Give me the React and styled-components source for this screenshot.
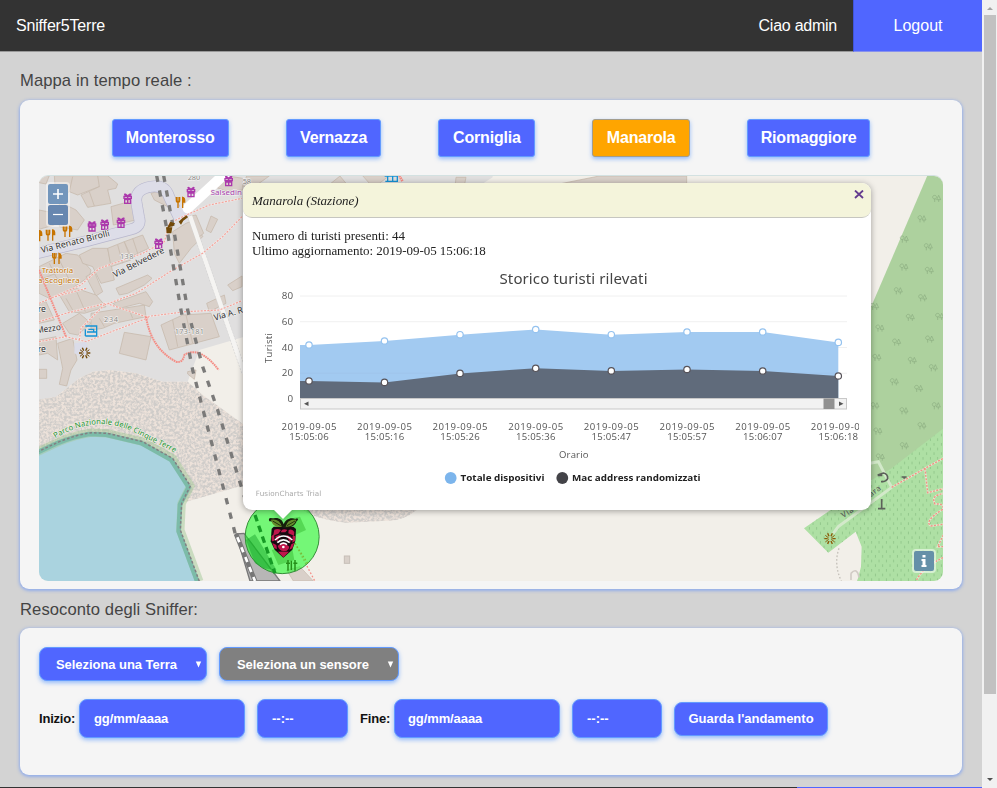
import React from "react";
import styled, { createGlobalStyle, css } from "styled-components";

const BLUE = "#5066ff";

const GlobalStyle = createGlobalStyle`
  * { box-sizing: border-box; }
  html, body { margin: 0; padding: 0; overflow: hidden; background: #d3d3d3; }
  body, button { font-family: "Liberation Sans", Arial, sans-serif; }
`;

const Screen = styled.div`
  display: flex;
  width: 997px;
  height: 788px;
  overflow: hidden;
`;
const Page = styled.div`
  display: flex;
  flex-direction: column;
  width: 982px;
  background: #d3d3d3;
`;
const Header = styled.header`
  display: flex;
  height: 52px;
  flex: none;
  background: #333;
  border-bottom: 1px solid #999;
  color: #fff;
  font-size: 16px;
  line-height: 51px;
`;
const Brand = styled.div`
  flex: 1;
  padding-left: 16px;
  letter-spacing: -0.17px;
`;
const Greeting = styled.div`
  padding-right: 16px;
  letter-spacing: -0.25px;
`;
const Logout = styled.a`
  width: 129px;
  height: 52px;
  text-align: center;
  background: ${BLUE};
  border-left: 1px solid #4055d8;
  border-bottom: 1px solid #8791ee;
`;
const Main = styled.main`
  display: flex;
  flex-direction: column;
  height: 735px;
  flex: none;
  padding: 0 20px;
`;
const Title = styled.h2`
  margin: 0;
  padding-top: ${(p) => p.$top}px;
  height: ${(p) => p.$h}px;
  font-size: 16.6px;
  line-height: 20px;
  font-weight: 400;
  letter-spacing: 0.09px;
  color: #444;
`;
const Card = styled.section`
  width: 942px;
  height: ${(p) => p.$h}px;
  flex: none;
  padding: 19px;
  border-radius: 9px;
  background: #f5f5f5;
  box-shadow: 0 1px 3px 1px rgba(87, 140, 255, 0.5);
`;
const glow = css`
  border: 1px solid #639bff;
  box-shadow: 0 2px 4px rgba(70, 140, 255, 0.55);
`;
const Towns = styled.nav`
  display: flex;
  justify-content: center;
  gap: 57px;
  height: 57px;
`;
const Town = styled.button`
  ${glow}
  width: ${(p) => p.$w}px;
  height: 38px;
  padding: 0;
  border-radius: 3px;
  border-color: ${(p) => (p.$active ? "#a39d8c" : "#639bff")};
  background: ${(p) => (p.$active ? "#ffa500" : BLUE)};
  color: #fff;
  font-size: 16px;
  font-weight: 700;
  letter-spacing: -0.18px;
`;
const MapFrame = styled.div`
  position: relative;
  width: 904px;
  height: 405px;
  border-radius: 9px;
  box-shadow: 0 -1px 0 #d3e1e1;
`;
const MapSvg = styled.svg`
  display: block;
  border-radius: 9px;
`;
const ZoomBox = styled.div`
  position: absolute;
  left: 7px;
  top: 6px;
  display: flex;
  flex-direction: column;
  gap: 1px;
  padding: 2px;
  border-radius: 4px;
  background: rgba(255, 255, 255, 0.45);
`;
const MapButton = styled.button`
  display: grid;
  place-items: center;
  width: 20px;
  height: 20px;
  padding: 0;
  border: 0;
  border-radius: 2px;
  background: ${(p) => p.$bg || "#7396bc"};
  color: #fff;
`;
const InfoBox = styled.div`
  position: absolute;
  left: 873px;
  top: 373px;
  padding: 2px;
  border-radius: 4px;
  background: rgba(255, 255, 255, 0.5);
`;
const Popup = styled.article`
  position: absolute;
  left: 204px;
  top: 7px;
  width: 628px;
  height: 327px;
  border-radius: 9px;
  background: #fff;
  filter: drop-shadow(0 1px 3px rgba(0, 0, 0, 0.35));
  font-family: "Liberation Serif", "Times New Roman", serif;
  color: #222;
  &::after {
    content: "";
    position: absolute;
    left: 30px;
    top: 326px;
    border: 10px solid transparent;
    border-top-color: #fff;
    border-bottom: 0;
  }
`;
const PopupHead = styled.header`
  display: flex;
  justify-content: space-between;
  height: 35px;
  padding: 7px 7px 0 9px;
  border-bottom: 1px solid #c6c6c0;
  border-radius: 9px;
  background: #f4f4db;
  font-size: 13px;
  line-height: 22px;
  font-style: italic;
  letter-spacing: -0.05px;
`;
const PopupText = styled.p`
  margin: 10px 0 0 9px;
  font-size: 13px;
  line-height: 15px;
  letter-spacing: -0.03px;
`;
const ChartSvg = styled.svg`
  display: block;
  margin: 4px 0 0 9px;
`;
const Row = styled.div`
  display: flex;
  align-items: center;
  height: ${(p) => p.$h}px;
  margin-bottom: 18px;
  font-size: 13px;
  font-weight: 700;
`;
const Field = styled.div`
  ${glow}
  display: flex;
  align-items: center;
  justify-content: space-between;
  width: ${(p) => p.$w}px;
  height: ${(p) => p.$h}px;
  margin-right: 12px;
  padding: 0 4px 0 ${(p) => p.$pad}px;
  border-radius: 8px;
  background: ${(p) => (p.$muted ? "#808080" : BLUE)};
  color: #fff;
  letter-spacing: ${(p) => p.$ls || 0}px;
`;
const Label = styled.label`
  width: ${(p) => p.$w}px;
  color: #111;
  letter-spacing: -0.2px;
`;
const Submit = styled.button`
  ${glow}
  width: 154px;
  height: 34px;
  padding: 0;
  border-radius: 8px;
  background: ${BLUE};
  color: #fff;
  font-size: 13px;
  font-weight: 700;
`;
const Footer = styled.footer`
  display: flex;
  justify-content: flex-end;
  height: 1px;
  flex: none;
  background: #333;
`;
const FooterAccent = styled.div`
  width: 185px;
  background: ${BLUE};
`;
const Scrollbar = styled.aside`
  display: flex;
  flex-direction: column;
  width: 15px;
  padding: 0 1px 0 2px;
  background: #f1f1f1;
`;
const Thumb = styled.div`
  height: 679px;
  background: #c1c1c1;
`;

const towns = [
  ["Monterosso", 117], ["Vernazza", 95.7], ["Corniglia", 97], ["Manarola", 97.5], ["Riomaggiore", 123.3],
];

const buildings = [
  "9,120 60,130 55,165 9,178", "55,17 200,17 215,40 125,75 100,65 60,90",
  "135,75 190,50 185,17 215,17 245,42 240,55 215,60 225,100 155,112", "225,110 290,92 300,150 232,165",
  "70,95 120,120 145,150 125,180 70,170", "9,17 40,17 30,42 9,38",
  "9,290 90,250 125,255 165,300 160,320 100,360 40,385 9,370", "130,255 170,235 215,235 235,330 195,340 170,290 140,280",
  "215,235 265,215 285,270 225,290", "265,215 320,195 338,235 285,260", "150,320 175,305 200,365 180,378",
  "9,400 30,395 55,450 9,460", "70,375 120,355 180,375 210,410 145,430 100,425", "80,460 130,430 165,460 125,495 100,490",
  "165,430 325,405 330,440 235,460 200,475 165,480", "240,355 335,315 348,325 325,345 275,370 250,375",
  "230,400 330,365 350,395 340,410 310,400 250,415", "265,487 345,500 330,570 250,550",
  "375,465 440,435 525,430 550,500 400,540", "415,250 410,185 450,160 475,150 500,200 465,235 430,280",
  "345,70 380,60 395,110 355,90", "455,140 480,135 503,190 490,200", "510,180 525,138 545,148 525,188",
  "575,345 618,318 618,350 590,362", "512,400 565,375 570,400 520,425", "535,50 570,17 620,25 620,60 575,65",
  "9,510 60,500 65,570 35,550 9,555", "65,520 110,505 123,570 105,600 92,648 70,643 80,595", "9,598 32,598 32,625 9,625",
  "455,605 480,600 475,628 455,612",
];
const walls = "M70 270L105 340 M40 280L75 350 M90 385L110 420 M120 360L148 425 M190 445L205 470 M280 420L290 445 M245 225L260 280 M290 205L305 250 M160 65L175 108 M100 65L110 20 M410 450L425 530 M450 435L470 520 M9 330L60 310";
const footpaths = [
  "9,400 55,380 135,345 190,295 320,250 385,215 400,160 440,140 520,105 618,85",
  "9,455 90,430 210,400 330,440 450,425 550,420 618,392",
  "150,355 50,382", "9,515 90,500 150,515 240,480 340,442", "130,510 135,475 205,405",
  "205,405 300,370 410,300 500,250 560,200 618,140",
];
const rails = ["362,17 395,190 435,420 470,600 565,965 600,1100", "383,17 415,190 455,420 500,590 545,720 625,980"];
const gifts = [[275, 85], [465, 65], [578, 32], [168, 168], [206, 163], [255, 157], [368, 220]];
const restaurants = [[433, 97], [94, 184], [43, 195], [62, 265], [4, 197]];
const trees = [
  [230, 86], [186, 147], [133, 208], [205, 231], [132, 292], [208, 302], [115, 363], [188, 384], [151, 443], [239, 440],
  [60, 475], [110, 517], [209, 508], [51, 563], [157, 572], [220, 594], [103, 636], [176, 656], [45, 708], [132, 723],
  [229, 708], [186, 768], [54, 784], [133, 828], [61, 862], [44, 410],
];

const Gift = ({ x, y }) => (
  <g transform={`translate(${x} ${y})`} stroke="#ac39ac" fill="none" strokeWidth="4">
    <path d="M-11-6H11V0H-11Z M-9 4H9V15H-9Z M0-6V15 M0-7C-12-20-12-6 0-7C12-20 12-6 0-7" />
  </g>
);
const Cutlery = ({ x, y }) => (
  <g transform={`translate(${x} ${y})`} stroke="#c77400" fill="none" strokeWidth="4">
    <path d="M-12-16V-6Q-12 0-7 0Q-2 0-2-6V-16 M-7-16V17" />
    <path d="M7 17V-15Q14-14 13-1H7" fill="#c77400" />
  </g>
);
const Burst = ({ x, y, color = "#734a08" }) => (
  <g transform={`translate(${x} ${y})`} stroke={color} strokeWidth="4.2">
    <path d="M7 0H17 M-7 0H-17 M3-7L7-16 M-3-7L-7-16 M3 7L7 16 M-3 7L-7 16" />
    <path d="M4-2L14-10 M-4-2L-14-10 M4 2L14 10 M-4 2L-14 10" strokeWidth="3" />
  </g>
);

const shoreline = "M-10,852 L70,815 Q120,795 165,788 L215,790 L320,815 L410,865 L463,948 L437,1000 L433,1080 L490,1234";

function Raspberry() {
  return (
    <g transform="translate(240 400) scale(.33333)">
      <path d="M95 386 L101 380 H160 L168 387 L166 423 L157 449 L130 473 L104 449 L92 424Z" fill="#160b10" />
      <path d="M130 383C116 379 99 361 88 364C83 350 94 355 102 355C116 352 128 360 131 373C136 357 153 351 166 357C177 352 175 361 170 363C166 377 149 387 130 383Z" fill="#16200c" />
      <path d="M93 359Q119 355 125 380Q99 385 93 359Z M169 359Q142 357 137 380Q161 382 169 359Z" fill="#648d2b" />
      <path d="M98 363L122 377 M165 363L141 377" stroke="#23330f" strokeWidth="3" />
      <g fill="#bf174b">
        <path d="M103 389Q113 384 123 390L115 401Q106 403 99 409Z M126 390Q132 386 142 390L136 397H122Z M146 390Q157 385 163 396L162 407L145 400Z M94 409L102 402L104 422L96 424Z M158 407L166 408L165 423L157 428Z M97 429L109 435L111 447L103 445Z M113 438Q129 420 148 440Q145 455 130 453Q118 453 113 438Z M154 433L163 428L157 445L148 449Z M114 455Q131 454 147 455L130 472Z M106 409L122 403L111 427Z M139 404L154 411L151 429Z" />
      </g>
      <g fill="none" stroke="#fff" strokeWidth="5"><path d="M105 420Q130 396 157 420 M112 428Q130 411 149 428 M120 434Q130 425 141 434" /></g>
      <circle cx="130" cy="441" r="4" fill="#fff" />
    </g>
  );
}

function TownMap() {
  return (
    <MapSvg width="904" height="405" viewBox="39 176 904 405" fontFamily="Noto Sans, sans-serif">
      <defs>
        <filter id="sand" x="0" y="0" width="100%" height="100%" colorInterpolationFilters="sRGB">
          <feTurbulence type="fractalNoise" baseFrequency=".13" numOctaves="2" seed="5" />
          <feColorMatrix values="0 0 0 0 .81  0 0 0 0 .80  0 0 0 0 .79  3.4 0 0 0 -1.2" />
          <feComposite in2="SourceAlpha" operator="in" result="grain" />
          <feMerge><feMergeNode in="SourceGraphic" /><feMergeNode in="grain" /></feMerge>
        </filter>
        <pattern id="scrub" width="22" height="28" patternUnits="userSpaceOnUse">
          <path d="M4 3V11 M15 17V25" stroke="#87bd82" strokeWidth="2.2" />
        </pattern>
        <g id="tree" fill="none" stroke="#8bac80" strokeWidth="2">
          <path d="M-6-10C-14-10-14 1-6 1C1 1 1-10-6-10M-6 0V10 M6-10L0 3H12Z M6 3V10" />
        </g>
      </defs>
      <rect x="39" y="176" width="904" height="405" fill="#f2efe9" />
      <g transform="translate(36 170) scale(.33333)">
        <path d="M0 0H1370V22L625 500L490 540L455 635L380 635L300 610L220 600L170 605L130 625L60 680L0 695Z" fill="#e0dfdf" />
        <path d="M0 690L60 680L130 625L170 605L220 600L300 610L380 635H455L500 675L625 765V945L440 998L420 1010L0 1010Z" fill="#ede2da" filter="url(#sand)" />
        <path d="M800 1020H1142Q1100 1054 1052 1052L930 1058Q840 1048 800 1020Z" fill="#ede2da" filter="url(#sand)" />
        <g fill="#d9d0c9" stroke="#c6b8aa" strokeWidth="2.2">
          {buildings.map((points) => <polygon key={points} points={points} />)}
          <path d={walls} fill="none" />
          <path d="M632 18H700L655 50H620Z M885 40L912 18L930 40Z M980 17H1060L1030 40H1000Z M1260 22H1290L1286 42H1258Z M1690 18H1952V44H1560Z" />
        </g>
        <g fill="none" strokeLinejoin="round">
          <path d="M0 250Q140 218 285 178Q318 170 309 142L301 96Q296 58 345 50Q388 43 400 82L430 145" stroke="#b8b7cd" strokeWidth="35" />
          <path d="M0 250Q140 218 285 178Q318 170 309 142L301 96Q296 58 345 50Q388 43 400 82L430 145" stroke="#dddde8" strokeWidth="31" />
          <path d="M425 120L458 142" stroke="#dddde8" strokeWidth="38" />
          <path d="M590-10L455 115" stroke="#fff" strokeWidth="31" strokeLinecap="round" />
          <path d="M462 138L625 610" stroke="#cfcfcf" strokeWidth="16" strokeDasharray="6 4" />
          <path d="M462 138L625 610" stroke="#f5f4f2" strokeWidth="13" />
          {footpaths.map((points) => (
            <g key={points}><polyline points={points} stroke="#f4eeee" strokeWidth="6" opacity=".7" /><polyline points={points} stroke="#f5a197" strokeWidth="3.4" strokeDasharray="6 4" /></g>
          ))}
          <path d="M9 300L90 500 M330 440Q345 535 420 575Q440 580 445 555Q490 525 548 600" stroke="#f58c84" strokeWidth="6" strokeDasharray="5 2" />
          {rails.map((points) => <polyline key={points} points={points} stroke="#7b7a79" strokeWidth="10" strokeDasharray="19 26" />)}
          <path d="M115 520L150 515L162 545L140 562L115 550Z" fill="#dbdce8" />
        </g>
        <path d={`${shoreline}V1260H-10Z`} fill="#aad3df" />
        <path d={shoreline} stroke="#9fc795" strokeOpacity=".48" strokeWidth="25" fill="none" />
        <path d={shoreline} stroke="#76b7a4" strokeOpacity=".85" strokeWidth="14" fill="none" transform="translate(-5 4)" />
        <path d={shoreline} stroke="#827f83" strokeWidth="4.5" strokeDasharray="8 6" fill="none" />
        <path id="park-label" d="M58 805Q180 730 295 787L440 860" fill="none" />
        <text fontSize="23" fill="#269735" stroke="#efeae4" strokeWidth="4" paintOrder="stroke"><textPath href="#park-label" textLength="385">Parco Nazionale delle Cinque Terre</textPath></text>
        {gifts.map(([x, y]) => <Gift key={`${x}-${y}`} x={x} y={y} />)}
        {restaurants.map(([x, y]) => <Cutlery key={`${x}-${y}`} x={x} y={y} />)}
        <Burst x={146} y={549} />
        <g fill="#734a08"><path d="M390 172H409L406 190H392Z M403 155L417 160L412 168L393 173Z M428 155Q435 146 452 136L456 142L442 152L435 164Z" /></g>
        <g fill="none" stroke="#1593d5" strokeWidth="4"><path d="M148 468H182V498H148 M148 478V498 M153 486H182 M157 478H173V485 M1046 18H1084V34H1048 M1055 18V32 M1070 20V34" /></g>
        <g stroke="#efeeee" strokeWidth="4" paintOrder="stroke" fontSize="24">
          <g fill="#333" fontSize="26">
            <text transform="translate(17 249) rotate(-14)" textLength="212" lengthAdjust="spacingAndGlyphs">Via Renato Birolli</text>
            <text transform="translate(237 323) rotate(-27)" textLength="168" lengthAdjust="spacingAndGlyphs">Via Belvedere</text>
            <text transform="translate(536 452) rotate(-16)" textLength="90" lengthAdjust="spacingAndGlyphs">Via A. R</text>
            <text transform="translate(2 490) rotate(-8)" textLength="74" lengthAdjust="spacingAndGlyphs">Mezzo</text>
            <text x="5" y="427">re</text><text x="5" y="545">re</text>
          </g>
          <g fill="#8c8985" fontSize="22">
            <text x="252" y="268" textLength="40">138</text><text x="204" y="456" textLength="42">234</text>
            <text x="416" y="491" textLength="88">173-181</text><text x="455" y="30">280</text><text x="620" y="42">58</text>
          </g>
          <g fill="#c77400"><text x="17" y="308" textLength="95">Trattoria</text><text x="6" y="338" textLength="125">a Scogliera</text></g>
          <text x="524" y="76" fill="#a942ae" textLength="94">Salsedin</text>
        </g>
        <path d="M1090 17L1100 35" stroke="#f58c84" strokeWidth="8" strokeDasharray="5 2" />
      </g>
      <g transform="translate(860 170) scale(.33333)">
        <path d="M205 10H255V930H25V430Z" fill="#add19e" />
        {trees.map(([x, y]) => <use key={`${x}-${y}`} href="#tree" x={x} y={y} />)}
      </g>
      <g transform="translate(555 400) scale(.33333)" fill="none">
        <path d="M747 385L870 300L950 240L1010 205L1170 82V550H905L918 500L920 440L902 395L820 458Z" fill="#aee0a4" />
        <path d="M747 385L870 300L950 240L1010 205L1170 82V550H905L918 500L920 440L902 395L820 458Z" fill="url(#scrub)" />
        <path d="M835 400L850 380L1010 262 M1010 262L970 185L945 190" stroke="#d3e9ca" strokeWidth="9" />
        <path d="M1010 262L1110 205L1170 172 M1110 205L1118 278L1170 265 M1170 280Q1125 285 1140 312Q1170 310 1163 328Q1105 365 1128 378L1170 372 M1165 405L1148 440L1170 440 M1085 540Q1105 500 1170 470" stroke="#dcebcf" strokeWidth="6" />
        <path d="M1010 262L1110 205L1170 172 M1110 205L1118 278L1170 265 M1170 280Q1125 285 1140 312Q1170 310 1163 328Q1105 365 1128 378L1170 372 M1165 405L1148 440L1170 440 M1085 540Q1105 500 1170 470" stroke="#f09384" strokeWidth="4.2" strokeDasharray="6 4" />
        <path d="M852 445Q835 495 860 545" stroke="#c5c1ba" strokeWidth="4" strokeDasharray="5 6" />
        <path d="M888 520Q906 500 912 532 M888 520V540" stroke="#d1cbc5" strokeWidth="5" />
        <g stroke="#5c615a" strokeWidth="5"><path d="M968 225L985 219Q999 222 998 236Q993 246 978 245 M968 226H982 M980 297V326 M969 326H991 M1040 231H1055 M1045 234H1051" /></g>
        <g fill="#555" fontSize="24"><text transform="translate(865 354) rotate(-32)" textLength="38">Via</text><text transform="translate(948 292) rotate(-38)" textLength="40">ara</text></g>
        <Burst x={825} y={416} color="#8c5b08" />
      </g>
      <g transform="translate(240 400) scale(.33333)">
        <path d="M-12 402L12 400L120 543H30Z" fill="#b7b6b6" stroke="#777" strokeWidth="4" />
        <path d="M-12 402L45 543" stroke="#777" strokeWidth="14" /><path d="M-8 412L45 543" stroke="#fff" strokeWidth="8" strokeDasharray="16 16" />
        <path d="M140 510L180 500L220 543H160Z" fill="#d9d0c9" stroke="#c5b8ac" strokeWidth="2" />
        <rect x="313" y="468" width="16" height="22" fill="#d9d0c9" stroke="#c6beb7" strokeWidth="3" />
        <path d="M165 430L227 548" stroke="#f58c84" strokeWidth="4" strokeDasharray="5 6" />
        <circle cx="126.5" cy="410" r="111" fill="#00ff10" fillOpacity=".52" stroke="#338e37" strokeWidth="3" />
        <path d="M45 345L105 520" stroke="#169a25" strokeWidth="10" strokeDasharray="20 14" />
        <path d="M18 420L45 403L110 510L70 505L45 490Z" fill="#149d27" opacity=".45" />
        <path d="M155 355L180 350L198 390L165 405Z M95 450L155 435L163 480L115 495Z" fill="#45c742" opacity=".65" />
        <path d="M165 430L204 492" stroke="#79bb36" strokeWidth="4" strokeDasharray="5 6" />
        <g stroke="#258f19" strokeWidth="4.5"><path d="M144 480V512 M154 482V510 M165 480V512 M138 490H150 M160 490H172" /></g>
      </g>
      <Raspberry />
    </MapSvg>
  );
}

const pointX = [309, 384.5, 460, 535.7, 611.3, 687, 762.7, 838.3];
const totals = [345, 341, 334.7, 329.5, 334.7, 332, 332, 342.4];
const random = [381, 382.4, 373.4, 368.3, 370.9, 369.5, 371, 376];
const times = ["15:05:06", "15:05:16", "15:05:26", "15:05:36", "15:05:47", "15:05:57", "15:06:07", "15:06:18"];
const area = (ys) => `M300,398.5 L300,${ys[0]} ${ys.map((y, i) => `L${pointX[i]},${y}`).join(" ")} V398.5Z`;

function Chart() {
  return (
    <ChartSvg width="607" height="245" viewBox="252 262 607 245" fontFamily="Open Sans, Noto Sans, sans-serif" fill="#555">
      <text x="499.5" y="284" fontSize="15" fill="#444" textLength="148" fontFamily="Noto Sans, sans-serif">Storico turisti rilevati</text>
      {[296, 321.7, 347.5, 373.2, 398.8].map((y, i) => (
        <g key={y}>
          <path d={`M300 ${y}H847`} stroke="#f0f0f0" />
          <text x="293" y={y + 3} fontSize="9.8" textAnchor="end">{80 - i * 20}</text>
        </g>
      ))}
      <path d={area(totals)} fill="#a2caf1" />
      <path d="M300 373.2H838" stroke="#9dc4ea" strokeWidth=".7" />
      <path d={area(random)} fill="#606b7b" />
      {pointX.map((x, i) => (
        <g key={x} fill="#fff" strokeWidth="1.2">
          <circle cx={x} cy={totals[i]} r="3.2" stroke="#94c2ef" />
          <circle cx={x} cy={random[i]} r="3.2" stroke="#575359" />
        </g>
      ))}
      <rect x="300.5" y="398.5" width="546" height="10.5" fill="#f2f2f2" stroke="#c8c8c8" />
      <rect x="823.5" y="398.5" width="11" height="10.5" fill="#919191" />
      <path d="M308.5 401.5V406L304 403.7Z M839 401.5V406L843.5 403.7Z" />
      <text transform="translate(272 363) rotate(-90)" fontSize="9.5" textLength="30">Turisti</text>
      {pointX.map((x, i) => (
        <g key={times[i]} fontSize="9.6">
          <text x={x - 27.5} y="429.5" textLength="55">2019-09-05</text>
          <text x={x - 19.7} y="439.5" textLength="39.5">{times[i]}</text>
        </g>
      ))}
      <text x="559" y="457.5" fontSize="9.5" textLength="29.5">Orario</text>
      <circle cx="450.7" cy="478" r="5.9" fill="#7cb5ec" />
      <circle cx="562.3" cy="478" r="5.9" fill="#434348" />
      <g fontWeight="700" fontSize="9.6" fill="#222">
        <text x="460.5" y="481" textLength="84" lengthAdjust="spacingAndGlyphs">Totale dispositivi</text>
        <text x="572" y="481" textLength="128.5" lengthAdjust="spacingAndGlyphs">Mac address randomizzati</text>
      </g>
      <text x="255.8" y="495.5" fontSize="7.2" fill="#aaa" textLength="65.5" fontFamily="DejaVu Sans, sans-serif">FusionCharts Trial</text>
    </ChartSvg>
  );
}

const Caret = () => <svg width="7" height="9" viewBox="0 0 7 9"><path d="M.8 1.5H6.2L3.5 7.5Z" fill="#fff" /></svg>;

export default function App() {
  return (
    <Screen>
      <GlobalStyle />
      <Page>
        <Header><Brand>Sniffer5Terre</Brand><Greeting>Ciao admin</Greeting><Logout>Logout</Logout></Header>
        <Main>
          <Title $top={19} $h={48}>Mappa in tempo reale :</Title>
          <Card $h={489}>
            <Towns>{towns.map(([name, w]) => <Town key={name} $w={w} $active={name === "Manarola"}>{name}</Town>)}</Towns>
            <MapFrame>
              <TownMap />
              <ZoomBox>
                <MapButton aria-label="Zoom avanti"><svg width="12" height="12"><path d="M6 1V11M1 6H11" stroke="#fff" strokeWidth="1.6" /></svg></MapButton>
                <MapButton aria-label="Zoom indietro" $bg="#6787b0"><svg width="12" height="12"><path d="M1 5.5H11" stroke="#fff" strokeWidth="1.2" /></svg></MapButton>
              </ZoomBox>
              <Popup>
                <PopupHead>
                  <span>Manarola (Stazione)</span>
                  <svg width="10" height="10" viewBox="0 0 10 10"><path d="M1 .5L9 8M9 .5L1 8" stroke="#633b8e" strokeWidth="1.8" /></svg>
                </PopupHead>
                <PopupText>Numero di turisti presenti: 44<br />Ultimo aggiornamento: 2019-09-05 15:06:18</PopupText>
                <Chart />
              </Popup>
              <InfoBox><MapButton $bg="#6590a8"><svg width="10" height="14"><path d="M3.5 1H6.5V3.5H3.5Z M2.5 5H6.5V11H7.5V13H2.5V11H3.5V7H2.5Z" fill="#fff" /></svg></MapButton></InfoBox>
            </MapFrame>
          </Card>
          <Title $top={11} $h={39}>Resoconto degli Sniffer:</Title>
          <Card $h={147}>
            <Row $h={34}>
              <Field $w={168} $h={34} $pad={16} $ls={-0.05}>Seleziona una Terra<Caret /></Field>
              <Field $w={180} $h={34} $pad={17} $ls={-0.05} $muted>Seleziona un sensore<Caret /></Field>
            </Row>
            <Row $h={39}>
              <Label $w={40}>Inizio:</Label>
              <Field $w={166} $h={39} $pad={14} $ls={-0.1}>gg/mm/aaaa</Field>
              <Field $w={91} $h={39} $pad={14}>--:--</Field>
              <Label $w={34}>Fine:</Label>
              <Field $w={166} $h={39} $pad={13} $ls={-0.1}>gg/mm/aaaa</Field>
              <Field $w={90} $h={39} $pad={14}>--:--</Field>
              <Submit>Guarda l'andamento</Submit>
            </Row>
          </Card>
        </Main>
        <Footer><FooterAccent /></Footer>
      </Page>
      <Scrollbar>
        <svg width="12" height="15"><path d="M3 10H9L6 7Z" fill="#a3a3a3" /></svg>
        <Thumb />
        <svg width="12" height="94"><path d="M3 84H9L6 87Z" fill="#505050" /></svg>
      </Scrollbar>
    </Screen>
  );
}
